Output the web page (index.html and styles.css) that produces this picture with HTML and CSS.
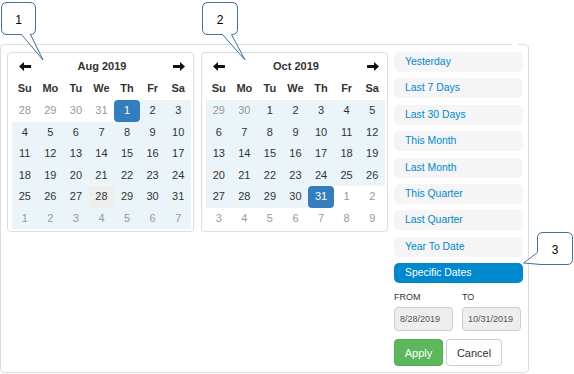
FILE: index.html
```html
<!DOCTYPE html>
<html lang="en">
<head>
    <meta charset="UTF-8">
    <title>Date range picker</title>
    <link rel="stylesheet" href="styles.css">
</head>
<body>
<div class="stage">
    <div class="picker">
        <div class="calendar">
            <div class="cal-head">
                <svg class="nav" width="12" height="9" viewBox="0 0 12 9"><path d="M0 4.5 L5 0 V3 H12 V6 H5 V9 Z"/></svg>
                <span class="month">Aug 2019</span>
                <svg class="nav" width="12" height="9" viewBox="0 0 12 9"><path d="M12 4.5 L7 0 V3 H0 V6 H7 V9 Z"/></svg>
            </div>
            <div class="dow"><span>Su</span><span>Mo</span><span>Tu</span><span>We</span><span>Th</span><span>Fr</span><span>Sa</span></div>
            <div class="days">
                <span class="off">28</span><span class="off">29</span><span class="off">30</span><span class="off">31</span><span class="active">1</span><span class="in">2</span><span class="in">3</span>
                <span class="in">4</span><span class="in">5</span><span class="in">6</span><span class="in">7</span><span class="in">8</span><span class="in">9</span><span class="in">10</span>
                <span class="in">11</span><span class="in">12</span><span class="in">13</span><span class="in">14</span><span class="in">15</span><span class="in">16</span><span class="in">17</span>
                <span class="in">18</span><span class="in">19</span><span class="in">20</span><span class="in">21</span><span class="in">22</span><span class="in">23</span><span class="in">24</span>
                <span class="in">25</span><span class="in">26</span><span class="in">27</span><span class="in hover">28</span><span class="in">29</span><span class="in">30</span><span class="in">31</span>
                <span class="in off">1</span><span class="in off">2</span><span class="in off">3</span><span class="in off">4</span><span class="in off">5</span><span class="in off">6</span><span class="in off">7</span>
            </div>
        </div>
        <div class="calendar">
            <div class="cal-head">
                <svg class="nav" width="12" height="9" viewBox="0 0 12 9"><path d="M0 4.5 L5 0 V3 H12 V6 H5 V9 Z"/></svg>
                <span class="month">Oct 2019</span>
                <svg class="nav" width="12" height="9" viewBox="0 0 12 9"><path d="M12 4.5 L7 0 V3 H0 V6 H7 V9 Z"/></svg>
            </div>
            <div class="dow"><span>Su</span><span>Mo</span><span>Tu</span><span>We</span><span>Th</span><span>Fr</span><span>Sa</span></div>
            <div class="days">
                <span class="in off">29</span><span class="in off">30</span><span class="in">1</span><span class="in">2</span><span class="in">3</span><span class="in">4</span><span class="in">5</span>
                <span class="in">6</span><span class="in">7</span><span class="in">8</span><span class="in">9</span><span class="in">10</span><span class="in">11</span><span class="in">12</span>
                <span class="in">13</span><span class="in">14</span><span class="in">15</span><span class="in">16</span><span class="in">17</span><span class="in">18</span><span class="in">19</span>
                <span class="in">20</span><span class="in">21</span><span class="in">22</span><span class="in">23</span><span class="in">24</span><span class="in">25</span><span class="in">26</span>
                <span class="in">27</span><span class="in">28</span><span class="in">29</span><span class="in">30</span><span class="active">31</span><span class="off">1</span><span class="off">2</span>
                <span class="off">3</span><span class="off">4</span><span class="off">5</span><span class="off">6</span><span class="off">7</span><span class="off">8</span><span class="off">9</span>
            </div>
        </div>
        <div class="ranges">
            <ul class="range-list">
                <li>Yesterday</li>
                <li>Last 7 Days</li>
                <li>Last 30 Days</li>
                <li>This Month</li>
                <li>Last Month</li>
                <li>This Quarter</li>
                <li>Last Quarter</li>
                <li>Year To Date</li>
                <li class="selected">Specific Dates</li>
            </ul>
            <div class="inputs">
                <div class="field">
                    <label>From</label>
                    <input type="text" value="8/28/2019" readonly>
                </div>
                <div class="field">
                    <label>To</label>
                    <input type="text" value="10/31/2019" readonly>
                </div>
            </div>
            <div class="buttons">
                <button class="btn btn-apply">Apply</button>
                <button class="btn btn-cancel">Cancel</button>
            </div>
        </div>
    </div>

    <!-- numbered callouts drawn over the screenshot -->
    <svg class="callouts" width="574" height="374" viewBox="0 0 574 374">
        <path d="M6 2.5 H30 Q35.5 2.5 35.5 8 V29 Q35.5 34.5 30 34.5 H30.5 L43 60 L21.5 34.5 H7 Q1.5 34.5 1.5 29 V8 Q1.5 2.5 7 2.5 Z"/>
        <text x="18.5" y="24">1</text>
        <path d="M208 2.5 H232 Q237.5 2.5 237.5 8 V29 Q237.5 34.5 232 34.5 H231.5 L245 60 L222.5 34.5 H208 Q202.5 34.5 202.5 29 V8 Q202.5 2.5 208 2.5 Z"/>
        <text x="220" y="24">2</text>
        <path d="M543 232.5 H567 Q572.5 232.5 572.5 238 V259 Q572.5 264.5 567 264.5 H541 L523.5 263 L537.5 252.5 V238 Q537.5 232.5 543 232.5 Z"/>
        <text x="555" y="254">3</text>
    </svg>
</div>
</body>
</html>
```

FILE: styles.css
```css
body {
    margin: 0;
    background: #fff;
    font-family: "Liberation Sans", Arial, sans-serif;
    color: #333;
}
.stage {
    position: relative;
    width: 574px;
    height: 374px;
    overflow: hidden;
}
.picker {
    position: relative;
    box-sizing: border-box;
    margin-top: 44px;
    width: 529px;
    height: 329px;
    border: 1px solid #ddd;
    border-radius: 4px;
    padding: 7px 5px 0 6px;
    display: flex;
    align-items: flex-start;
}
.picker::after {
    content: "";
    position: absolute;
    top: -1px;
    right: 10px;
    width: 6px;
    height: 1px;
    background: #fff;
}
.calendar {
    box-sizing: border-box;
    width: 187px;
    margin-right: 7px;
    border: 1px solid #ddd;
    border-radius: 4px;
    padding: 2px 2px 2px 4px;
}
.calendar + .calendar {
    margin-right: 6px;
}
.cal-head {
    height: 22px;
    display: flex;
    align-items: center;
    justify-content: space-between;
    padding: 0 6px 0 7px;
}
.nav {
    fill: #111;
}
.month {
    font-size: 11px;
    font-weight: bold;
}
.dow,
.days {
    display: grid;
    grid-template-columns: repeat(7, 1fr);
    width: 179px;
    text-align: center;
    font-size: 11px;
}
.dow {
    height: 23px;
    line-height: 23px;
    font-weight: bold;
}
.days {
    grid-auto-rows: 21.5px;
    line-height: 21.5px;
}
.days .in {
    background: #ebf4f8;
}
.days .off {
    color: #999;
}
.days .hover {
    background: #eee;
}
.days .active {
    background: #357ebd;
    color: #fff;
    border-radius: 4px;
}
.ranges {
    width: 129px;
}
.range-list {
    list-style: none;
    margin: 0;
    padding: 0;
    display: flex;
    flex-direction: column;
    gap: 6.4px;
}
.range-list li {
    height: 20px;
    line-height: 20px;
    padding-left: 11px;
    background: #f5f5f5;
    border-radius: 5px;
    color: #08c;
    font-size: 10.4px;
}
.range-list li.selected {
    background: #08c;
    color: #fff;
}
.inputs {
    display: flex;
    gap: 9px;
    margin-top: 8px;
}
.field {
    width: 59px;
}
.field label {
    display: block;
    height: 12px;
    line-height: 12px;
    margin-bottom: 4px;
    font-size: 9px;
    text-transform: uppercase;
}
.field input {
    box-sizing: border-box;
    width: 59px;
    height: 24px;
    margin: 0;
    padding: 0 0 0 5px;
    border: 1px solid #ccc;
    border-radius: 4px;
    background: #eee;
    color: #555;
    font-family: "Liberation Sans", Arial, sans-serif;
    font-size: 9px;
}
.buttons {
    display: flex;
    gap: 3px;
    margin-top: 8px;
}
.btn {
    height: 27px;
    margin: 0;
    border-radius: 4px;
    font-family: "Liberation Sans", Arial, sans-serif;
    font-size: 11px;
    cursor: pointer;
}
.btn-apply {
    width: 49px;
    background: #5cb85c;
    border: 1px solid #4cae4c;
    color: #fff;
}
.btn-cancel {
    width: 56px;
    background: #fff;
    border: 1px solid #ccc;
    color: #333;
}
.callouts {
    position: absolute;
    top: 0;
    left: 0;
    pointer-events: none;
}
.callouts path {
    fill: #fff;
    stroke: #41719c;
    stroke-width: 1;
}
.callouts text {
    font-family: "Liberation Sans", Arial, sans-serif;
    font-size: 12px;
    fill: #000;
    text-anchor: middle;
}
```
